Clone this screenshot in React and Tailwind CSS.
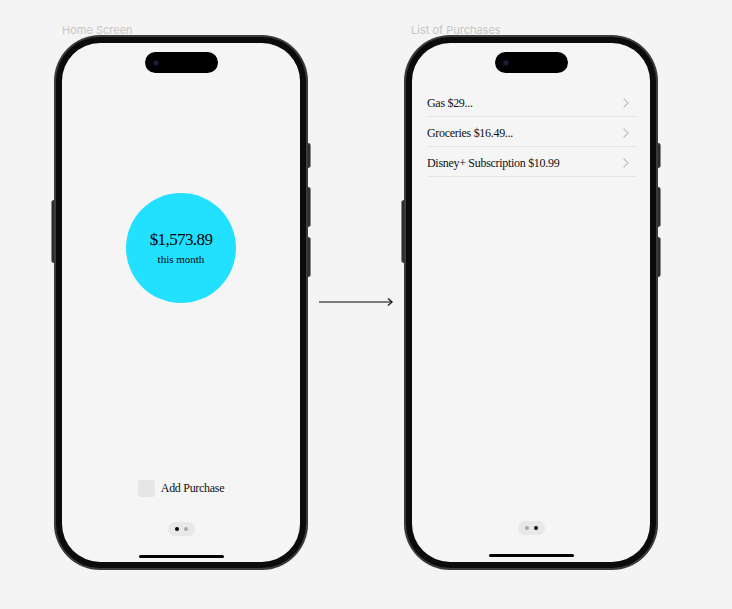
import React from "react";

const serif = { fontFamily: '"Liberation Serif", "DejaVu Serif", serif' };

function Phone({ children }) {
  return (
    <div className="relative w-[254px] h-[535px]">
      {/* side buttons */}
      <div className="absolute left-[-3px] top-[165px] w-[3px] h-[63px] rounded-l-sm bg-[#2c2c2c] border-l border-[#8a8a8a]" />
      <div className="absolute right-[-3px] top-[108px] w-[3px] h-[25px] rounded-r-sm bg-[#2c2c2c] border-r border-[#8a8a8a]" />
      <div className="absolute right-[-3px] top-[152px] w-[3px] h-[40px] rounded-r-sm bg-[#2c2c2c] border-r border-[#8a8a8a]" />
      <div className="absolute right-[-3px] top-[202px] w-[3px] h-[40px] rounded-r-sm bg-[#2c2c2c] border-r border-[#8a8a8a]" />
      <div className="w-full h-full rounded-[46px] bg-[#3b3b3b] p-[2px]">
        <div className="w-full h-full rounded-[44px] bg-[#0b0b0b] p-[6px]">
          <div className="w-full h-full rounded-[38px] bg-[#f5f5f5] flex flex-col items-center pt-[9px] overflow-hidden">
            <div className="w-[73px] h-[21px] rounded-full bg-black flex items-center pl-[8px]">
              <div className="w-[6px] h-[6px] rounded-full bg-[#1a1f3a] border border-[#0f1330]" />
            </div>
            {children}
          </div>
        </div>
      </div>
    </div>
  );
}

function Dots({ active }) {
  return (
    <div className="w-[27px] h-[14px] rounded-full bg-[#e8e8e8] flex items-center justify-center gap-[5px]">
      <div className={`w-[4px] h-[4px] rounded-full ${active === 0 ? "bg-black" : "bg-[#a8a8a8]"}`} />
      <div className={`w-[4px] h-[4px] rounded-full ${active === 1 ? "bg-black" : "bg-[#a8a8a8]"}`} />
    </div>
  );
}

function Chevron() {
  return (
    <svg width="6" height="10" viewBox="0 0 6 10" className="shrink-0">
      <path d="M1 1l4 4-4 4" fill="none" stroke="#c2c2c2" strokeWidth="1.2" strokeLinecap="round" strokeLinejoin="round" />
    </svg>
  );
}

const purchases = ["Gas $29...", "Groceries $16.49...", "Disney+ Subscription $10.99"];

export default function App() {
  return (
    <div className="w-[732px] h-[609px] bg-[#f4f4f4] flex items-start pl-[54px] pt-[22px]" style={{ fontFamily: "Inter, sans-serif" }}>
      {/* HOME SCREEN */}
      <div className="flex flex-col">
        <div className="pl-[8px] h-[13px] pt-[2px] text-[11px] leading-[13px] text-[#c6c6c6]">Home Screen</div>
        <Phone>
          <div className="mt-[120px] w-[110px] h-[110px] rounded-full bg-[#22e0ff] flex flex-col items-center justify-center text-black" style={serif}>
            <div className="text-[17px] leading-[20px] tracking-[-0.6px]">$1,573.89</div>
            <div className="text-[11px] leading-[13px] mt-[3px]">this month</div>
          </div>
          <div className="mt-[176px] flex items-center gap-[6px] text-[12px] text-[#111]" style={serif}>
            <div className="w-[17px] h-[17px] rounded-[3px] bg-[#e6e6e6]" />
            <span className="tracking-[-0.3px]">Add Purchase</span>
          </div>
          <div className="mt-[25px]">
            <Dots active={0} />
          </div>
          <div className="mt-[19px] w-[85px] h-[3px] rounded-full bg-black" />
        </Phone>
      </div>

      {/* ARROW */}
      <div className="w-[96px] h-[548px] flex items-center justify-center">
        <svg width="76" height="10" viewBox="0 0 76 10" className="mt-[12px]">
          <path d="M1 5h73" stroke="#555" strokeWidth="1.4" />
          <path d="M70 1.5l4 3.5-4 3.5" fill="none" stroke="#222" strokeWidth="1.4" />
        </svg>
      </div>

      {/* LIST OF PURCHASES */}
      <div className="flex flex-col">
        <div className="pl-[7px] h-[13px] pt-[2px] text-[11px] leading-[13px] text-[#c6c6c6]">List of Purchases</div>
        <Phone>
          <div className="mt-[14px] w-full pl-[15px] pr-[13px]" style={serif}>
            {purchases.map((p) => (
              <div key={p} className="h-[30px] pt-[3px] flex items-center justify-between border-b border-[#e4e4e4] pr-[8px]">
                <span className="text-[12px] text-[#111] tracking-[-0.3px]">{p}</span>
                <Chevron />
              </div>
            ))}
          </div>
          <div className="flex-1" />
          <Dots active={1} />
          <div className="mt-[19px] mb-[5px] w-[85px] h-[3px] rounded-full bg-black" />
        </Phone>
      </div>
    </div>
  );
}
